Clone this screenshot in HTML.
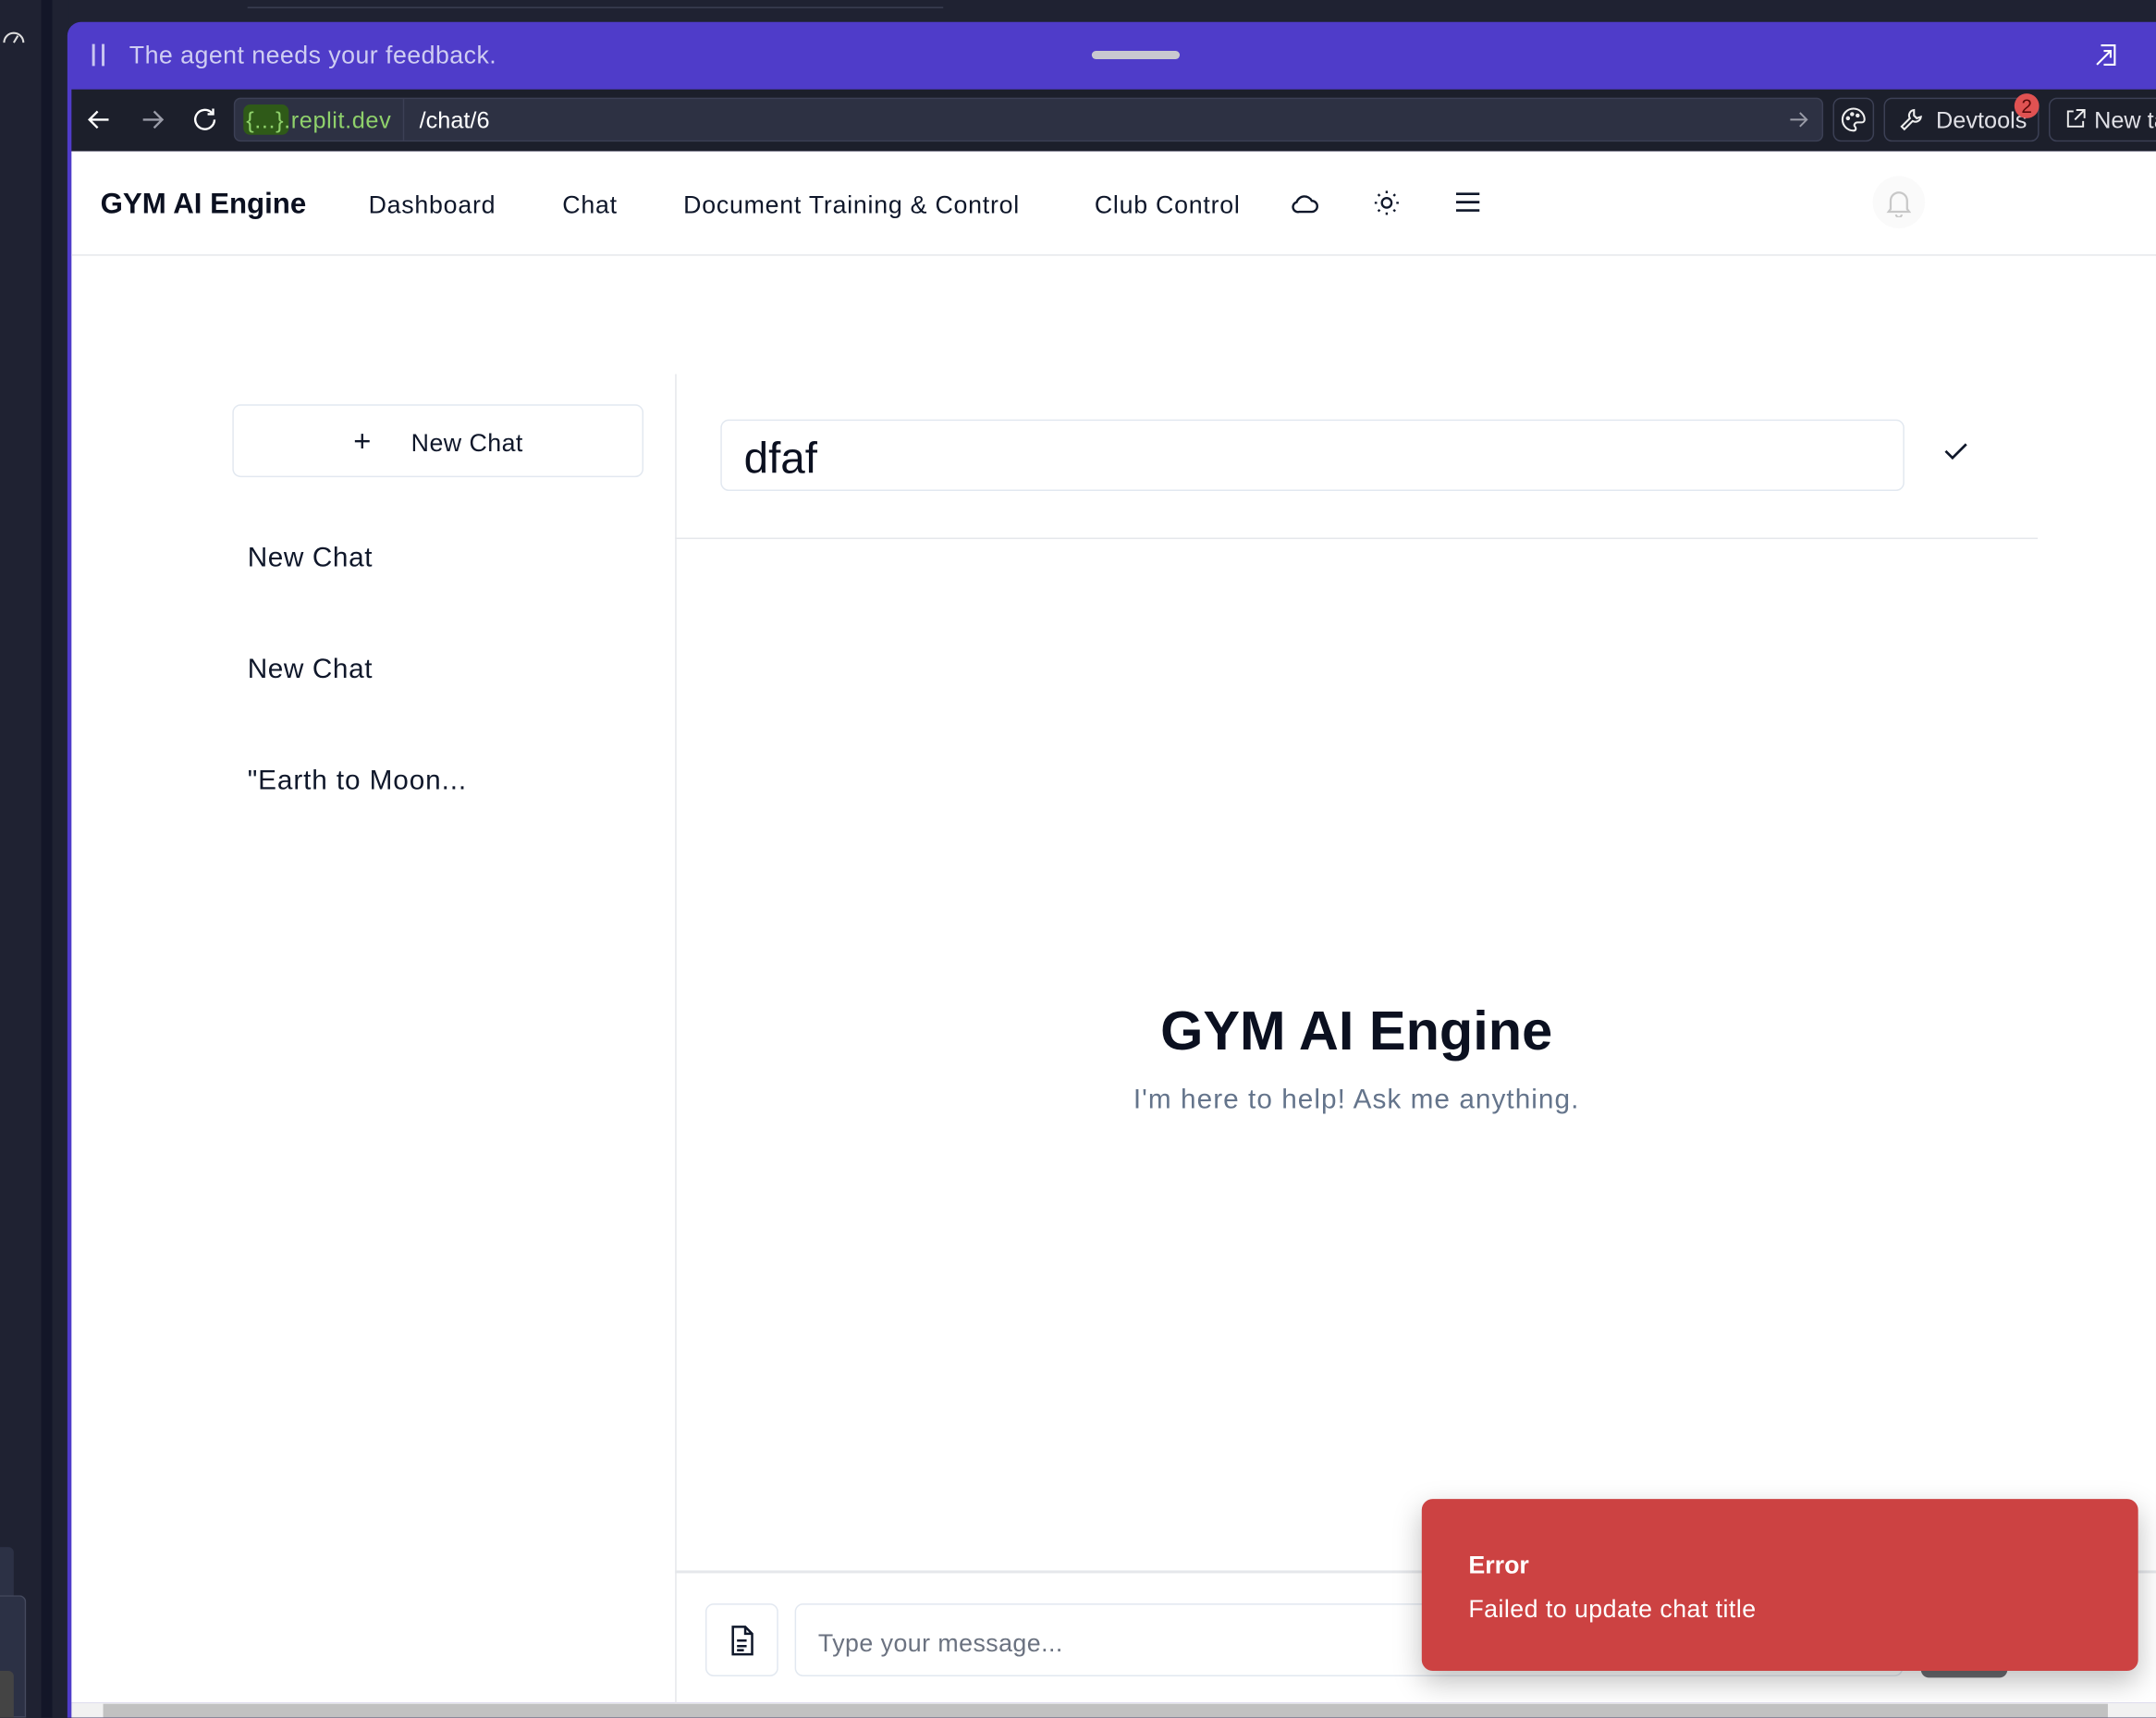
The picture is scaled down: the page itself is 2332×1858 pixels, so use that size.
<!DOCTYPE html>
<html><head><meta charset="utf-8"><style>
*{box-sizing:border-box;margin:0;padding:0}
html,body{width:2332px;height:1858px;overflow:hidden;background:#1f2232}
#s{position:absolute;left:0;top:0;width:1568px;height:1249px;transform:scale(1.48724);transform-origin:0 0;font-family:"Liberation Sans",sans-serif}
.a{position:absolute}
.nav{font-size:18px;color:#0f172a;top:139px;letter-spacing:.5px}
</style></head><body><div id="s">
<div class="a" style="left:0;top:0;width:30px;height:1249px;background:#1f2232"></div>
<div class="a" style="left:30px;top:0;width:8px;height:1249px;background:#131628"></div>
<div class="a" style="left:38px;top:0;width:12px;height:1249px;background:#1f2232"></div>
<div class="a" style="left:180px;top:0;width:506px;height:6px;border-bottom:1px solid #3a3e52"></div>
<svg class="a" style="left:1px;top:18px" width="18" height="16" viewBox="0 0 18 16" fill="none" stroke="#ddd" stroke-width="1.4"><path d="M2 13A7 7 0 0 1 16 13"/><path d="M9 13l3-5"/></svg>
<div class="a" style="left:0;top:1125px;width:10px;height:40px;background:#2c3145;border-radius:0 4px 4px 0"></div>
<div class="a" style="left:0;top:1160px;width:19px;height:89px;background:#2c3145;border:1px solid #454a5e;border-left:none;border-radius:0 5px 0 0"></div>
<div class="a" style="left:0;top:1215px;width:10px;height:34px;background:#444;border-radius:0 4px 0 0"></div>
<div class="a" style="left:49px;top:16px;width:1519px;height:1233px;background:#4f3cc9;border-radius:10px 0 0 0"></div>
<div class="a" style="left:67px;top:32px;width:2px;height:16px;background:#c9c6f0"></div>
<div class="a" style="left:74px;top:32px;width:2px;height:16px;background:#c9c6f0"></div>
<div class="a" style="left:94px;top:30px;font-size:18px;color:#cfcdf2;letter-spacing:.3px">The agent needs your feedback.</div>
<div class="a" style="left:794px;top:37px;width:64px;height:6px;border-radius:3px;background:#c8c8d0"></div>
<svg class="a" style="left:1523px;top:31px" width="18" height="18" viewBox="0 0 18 18" fill="none" stroke="#fff" stroke-width="1.4"><path d="M5 2h10v14H7"/><path d="M2 16L12 6M7 6h5v5"/></svg>
<div class="a" style="left:52px;top:65px;width:1516px;height:45px;background:#1c1f2b"></div>
<svg class="a" style="left:63px;top:78px" width="18" height="18" viewBox="0 0 18 18" fill="none" stroke="#fff" stroke-width="1.6"><path d="M16 9H2M8 3L2 9l6 6"/></svg>
<svg class="a" style="left:102px;top:78px" width="18" height="18" viewBox="0 0 18 18" fill="none" stroke="#9a9ca8" stroke-width="1.6"><path d="M2 9h14M10 3l6 6-6 6"/></svg>
<svg class="a" style="left:139px;top:77px" width="20" height="20" viewBox="0 0 20 20" fill="none" stroke="#fff" stroke-width="1.6"><path d="M17 10a7 7 0 1 1-2-5"/><path d="M16 2v4h-4"/></svg>
<div class="a" style="left:170px;top:71px;width:1156px;height:32px;background:#2d3143;border:1px solid #3c4055;border-radius:5px"></div>
<div class="a" style="left:177px;top:76px;width:33px;height:22px;background:#2f5a18;border-radius:5px"></div>
<div class="a" style="left:179px;top:78px;font-size:17px;color:#8fd16b;letter-spacing:.4px">{...}.replit.dev</div>
<div class="a" style="left:293px;top:72px;width:1px;height:30px;background:#3c4055"></div>
<div class="a" style="left:305px;top:78px;font-size:17px;color:#fff">/chat/6</div>
<svg class="a" style="left:1301px;top:80px" width="14" height="14" viewBox="0 0 14 14" fill="none" stroke="#9a9ca8" stroke-width="1.3"><path d="M1 7h12M8 2l5 5-5 5"/></svg>
<div class="a" style="left:1333px;top:71px;width:30px;height:32px;border:1px solid #3c4055;border-radius:6px"></div>
<svg class="a" style="left:1338px;top:77px" width="20" height="20" viewBox="0 0 20 20" fill="none" stroke="#eee" stroke-width="1.4"><path d="M10 2a8 8 0 0 0 0 16c2 0 2-2 1-3s0-3 2-3h3a2 2 0 0 0 2-2 8 8 0 0 0-8-8z"/><circle cx="6" cy="9" r=".8"/><circle cx="9" cy="6" r=".8"/><circle cx="13" cy="7" r=".8"/></svg>
<div class="a" style="left:1370px;top:71px;width:113px;height:32px;border:1px solid #3c4055;border-radius:6px"></div>
<svg class="a" style="left:1381px;top:78px" width="18" height="18" viewBox="0 0 18 18" fill="none" stroke="#eee" stroke-width="1.4"><path d="M11 2a4 4 0 0 0-3 6L2 14l2 2 6-6a4 4 0 0 0 6-3l-3 1-2-2z"/></svg>
<div class="a" style="left:1408px;top:78px;font-size:17px;color:#e0e0e6">Devtools</div>
<div class="a" style="left:1465px;top:68px;width:18px;height:18px;border-radius:9px;background:#e05252;color:#5a0a0a;font-size:14px;text-align:center;line-height:18px">2</div>
<div class="a" style="left:1490px;top:71px;width:90px;height:32px;border:1px solid #3c4055;border-radius:6px"></div>
<svg class="a" style="left:1502px;top:79px" width="15" height="15" viewBox="0 0 15 15" fill="none" stroke="#eee" stroke-width="1.3"><path d="M6 2H2v11h11V9M8 1h6v6M14 1L7 8"/></svg>
<div class="a" style="left:1523px;top:78px;font-size:17px;color:#e0e0e6;white-space:nowrap">New tab</div>
<div class="a" style="left:52px;top:110px;width:1516px;height:1128px;background:#fff"></div>
<div class="a" style="left:52px;top:185px;width:1516px;height:1px;background:#e5e7eb"></div>
<div class="a" style="left:73px;top:137px;font-size:21px;font-weight:bold;color:#0b1020">GYM AI Engine</div>
<div class="a nav" style="left:268px">Dashboard</div>
<div class="a nav" style="left:409px">Chat</div>
<div class="a nav" style="left:497px">Document Training &amp; Control</div>
<div class="a nav" style="left:796px">Club Control</div>
<svg class="a" style="left:939px;top:138px" width="21" height="18" viewBox="0 0 21 18" fill="none" stroke="#0f172a" stroke-width="1.6"><path d="M6 16h9a4 4 0 0 0 0-8 6 6 0 0 0-11 1 3.5 3.5 0 0 0 2 7z"/></svg>
<svg class="a" style="left:998px;top:137px" width="21" height="21" viewBox="0 0 24 24" fill="none" stroke="#0f172a" stroke-width="1.8"><circle cx="12" cy="12" r="4"/><path d="M12 2v2M12 20v2M4.9 4.9l1.4 1.4M17.7 17.7l1.4 1.4M2 12h2M20 12h2M4.9 19.1l1.4-1.4M17.7 6.3l1.4-1.4"/></svg>
<svg class="a" style="left:1058px;top:139px" width="19" height="16" viewBox="0 0 19 16" fill="none" stroke="#0f172a" stroke-width="1.8"><path d="M1 2h17M1 8h17M1 14h17"/></svg>
<div class="a" style="left:1362px;top:128px;width:38px;height:38px;border-radius:19px;background:#fafafa"></div>
<svg class="a" style="left:1372px;top:137px" width="18" height="21" viewBox="0 0 18 21" fill="none" stroke="#c8c8c8" stroke-width="1.5"><path d="M3 15V9a6 6 0 0 1 12 0v6l1.5 2h-15zM7 19a2 2 0 0 0 4 0"/></svg>
<div class="a" style="left:169px;top:294px;width:299px;height:53px;border:1px solid #e2e8f0;border-radius:6px"></div>
<div class="a" style="left:257px;top:308px;font-size:22px;color:#0f172a">+</div>
<div class="a" style="left:299px;top:312px;font-size:18px;color:#0f172a;letter-spacing:.3px">New Chat</div>
<div class="a" style="left:180px;top:395px;font-size:20px;color:#0f172a;letter-spacing:.4px">New Chat</div>
<div class="a" style="left:180px;top:476px;font-size:20px;color:#0f172a;letter-spacing:.4px">New Chat</div>
<div class="a" style="left:180px;top:557px;font-size:20px;color:#0f172a;letter-spacing:.6px">"Earth to Moon...</div>
<div class="a" style="left:491px;top:272px;width:1px;height:966px;background:#e5e7eb"></div>
<div class="a" style="left:524px;top:305px;width:861px;height:52px;border:1px solid #e2e8f0;border-radius:6px"></div>
<div class="a" style="left:541px;top:315px;font-size:32px;font-weight:500;color:#0b1020">dfaf</div>
<svg class="a" style="left:1413px;top:320px" width="19" height="16" viewBox="0 0 19 16" fill="none" stroke="#0f172a" stroke-width="1.8"><path d="M2 8l5 5L17 3"/></svg>
<div class="a" style="left:491px;top:391px;width:991px;height:1px;background:#e5e7eb"></div>
<div class="a" style="left:491px;top:728px;width:991px;text-align:center;font-size:40px;font-weight:bold;color:#0b1020">GYM AI Engine</div>
<div class="a" style="left:491px;top:789px;width:991px;text-align:center;font-size:20px;color:#64748b;letter-spacing:.7px">I'm here to help! Ask me anything.</div>
<div class="a" style="left:491px;top:1142px;width:1077px;height:2px;background:#e5e7eb"></div>
<div class="a" style="left:513px;top:1166px;width:53px;height:53px;border:1px solid #e2e8f0;border-radius:6px"></div>
<svg class="a" style="left:530px;top:1182px" width="19" height="22" viewBox="0 0 19 22" fill="none" stroke="#0f172a" stroke-width="1.7"><path d="M3 1h9l5 5v15H3zM12 1v5h5M6 11h7M6 15h7M6 18h5"/></svg>
<div class="a" style="left:578px;top:1166px;width:806px;height:53px;border:1px solid #e2e8f0;border-radius:6px"></div>
<div class="a" style="left:595px;top:1185px;font-size:18px;color:#6b7280;letter-spacing:.3px">Type your message...</div>
<div class="a" style="left:1397px;top:1200px;width:63px;height:20px;background:#6b6b70;border-radius:6px"></div>
<div class="a" style="left:1034px;top:1090px;width:521px;height:125px;background:#cc4242;border-radius:8px;box-shadow:0 8px 20px rgba(0,0,0,.25)"></div>
<div class="a" style="left:1068px;top:1128px;font-size:18px;font-weight:bold;color:#fff">Error</div>
<div class="a" style="left:1068px;top:1160px;font-size:18px;color:#fff;letter-spacing:.3px">Failed to update chat title</div>
<div class="a" style="left:52px;top:1238px;width:1516px;height:11px;background:#f1f1f1"></div>
<div class="a" style="left:75px;top:1239px;width:1458px;height:10px;background:#c1c1c1"></div>
</div></body></html>
